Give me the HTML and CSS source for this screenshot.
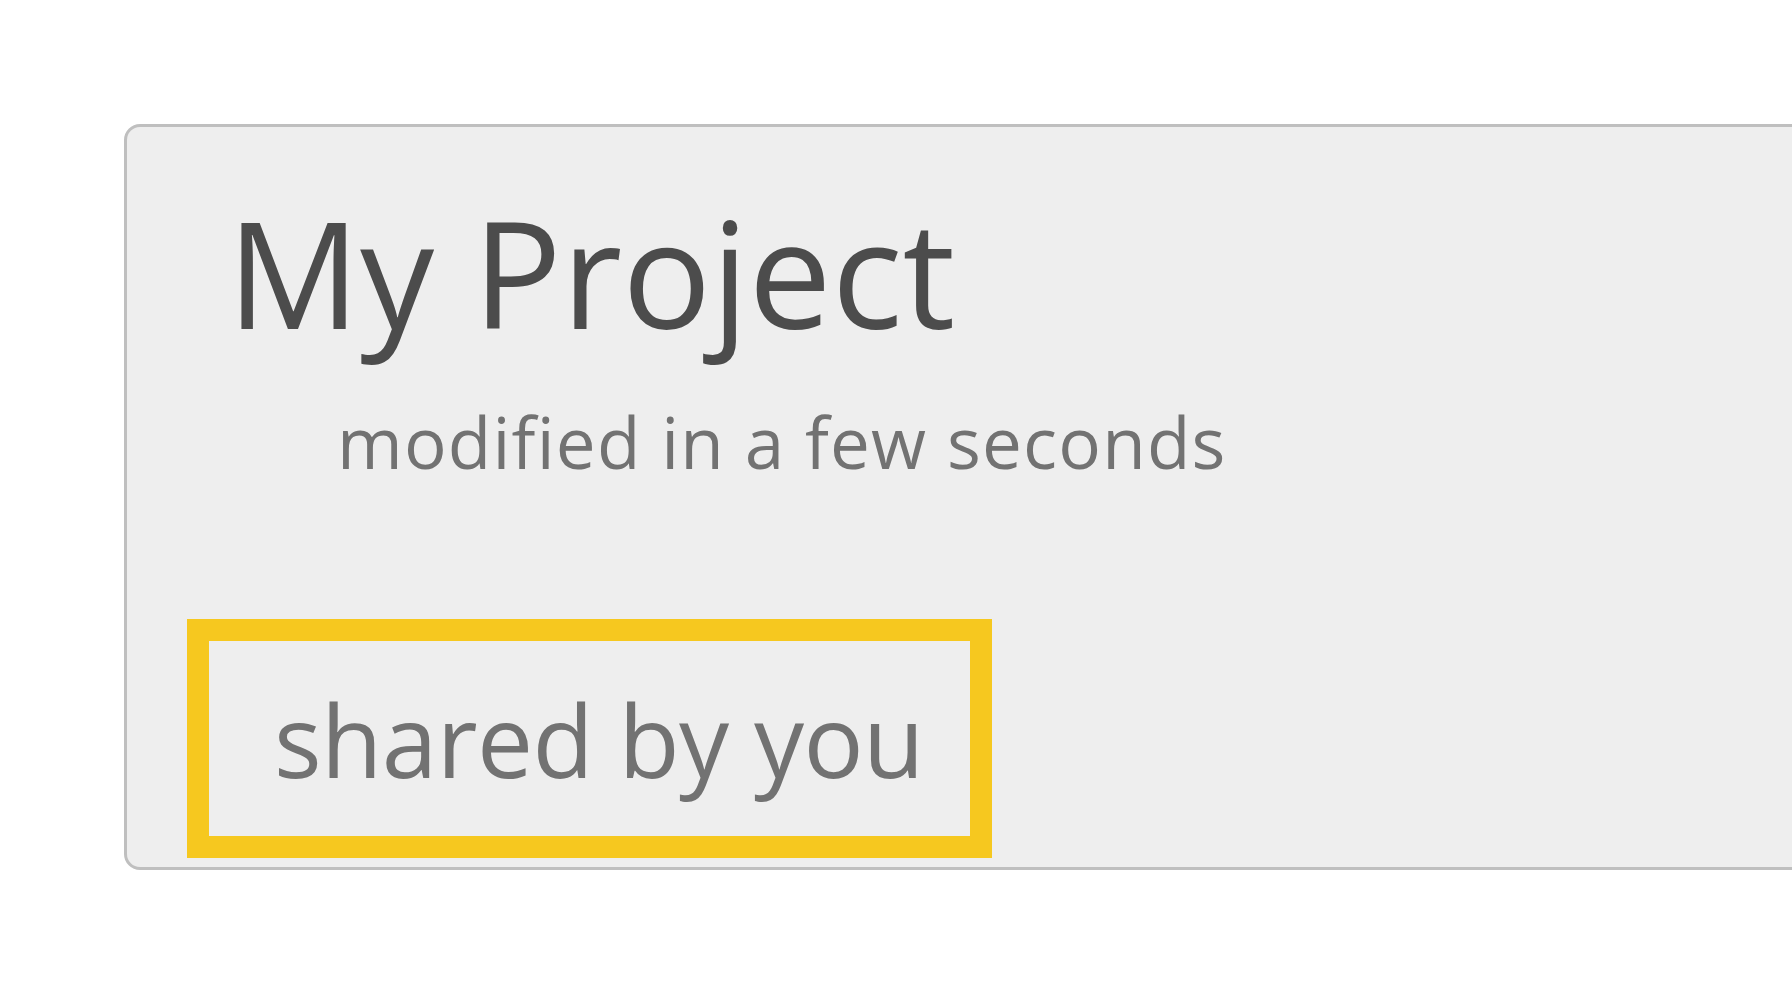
FILE: index.html
```html
<!DOCTYPE html>
<html>
<head>
<meta charset="utf-8">
<link rel="stylesheet" href="styles.css">
</head>
<body>
<div class="card">
  <h1 class="title">My Project</h1>
  <div class="meta">modified in a few seconds</div>
  <div class="badge">shared by you</div>
</div>
</body>
</html>
```
FILE: styles.css
```css
html, body {
  margin: 0;
  padding: 0;
  background: #ffffff;
  overflow: hidden;
  width: 1792px;
  height: 988px;
}
.card {
  box-sizing: border-box;
  margin: 124px 0 0 124px;
  width: 1760px;
  height: 746px;
  border: 3px solid #bfbfbf;
  border-radius: 16px;
  background: #eeeeee;
  display: flex;
  flex-direction: column;
  align-items: flex-start;
  padding: 71px 0 9px 0;
  font-family: "Open Sans", sans-serif;
}
.title {
  margin: 0 0 0 100px;
  font-size: 148px;
  font-weight: 400;
  line-height: 1;
  color: #4c4c4c;
}
.meta {
  margin: 60px 0 0 210px;
  font-size: 71px;
  line-height: 1;
  letter-spacing: 1.2px;
  color: #727272;
}
.badge {
  margin: auto 0 0 60px;
  border: 22px solid #f6c81f;
  padding: 48px 46px 47px 65px;
  font-size: 100px;
  line-height: 1;
  letter-spacing: -0.6px;
  color: #727272;
}
```
